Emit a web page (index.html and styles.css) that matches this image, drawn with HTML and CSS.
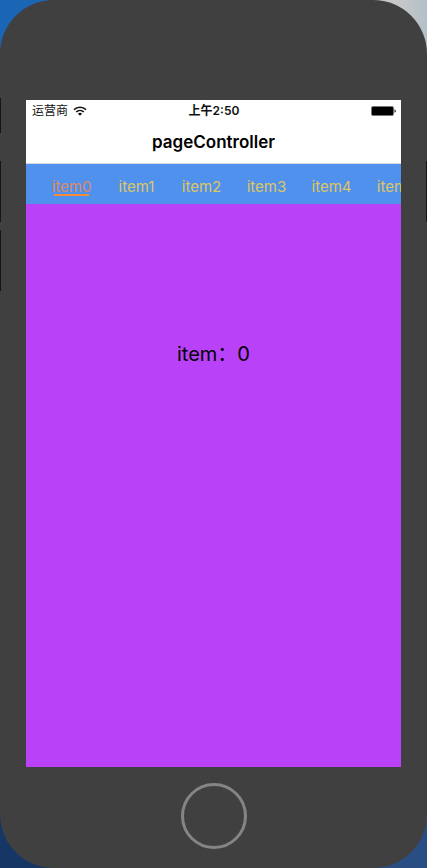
FILE: index.html
```html
<!DOCTYPE html>
<html lang="zh-CN">
<head>
<meta charset="utf-8">
<meta name="viewport" content="width=device-width, initial-scale=1">
<title>pageController</title>
<link rel="stylesheet" href="styles.css">
</head>
<body>
<div class="phone">
  <span class="side-key mute"></span>
  <span class="side-key volume-up"></span>
  <span class="side-key volume-down"></span>
  <span class="side-key power"></span>
  <main class="screen">
    <div class="status">
      <div class="carrier">
        <span>运营商</span>
        <svg class="wifi" viewBox="0 0 14 10" aria-hidden="true">
          <path d="M1 3.7a8.6 8.6 0 0 1 12 0M3.2 6a5.5 5.5 0 0 1 7.6 0" fill="none" stroke="#111" stroke-width="1.7"/>
          <path d="M4.9 7.7a3 3 0 0 1 4.2 0L7 9.8z" fill="#111"/>
        </svg>
      </div>
      <time class="clock">上午2:50</time>
      <svg class="battery" viewBox="0 0 25 10" aria-hidden="true">
        <rect x=".5" y=".5" width="22" height="9" rx="1.5" fill="#000" stroke="#777"/>
        <path d="M23.5 3.2q1.3 .5 1.3 1.8t-1.3 1.8z" fill="#111"/>
      </svg>
    </div>
    <header class="navbar"><h1>pageController</h1></header>
    <nav class="tabs">
      <button class="tab active" type="button"><span>item0</span></button>
      <button class="tab" type="button"><span>item1</span></button>
      <button class="tab" type="button"><span>item2</span></button>
      <button class="tab" type="button"><span>item3</span></button>
      <button class="tab" type="button"><span>item4</span></button>
      <button class="tab" type="button"><span>item5</span></button>
    </nav>
    <section class="page"><p>item：0</p></section>
  </main>
  <footer class="chin"><button class="home" type="button" aria-label="Home"></button></footer>
</div>
</body>
</html>
```
FILE: styles.css
```css
* { box-sizing: border-box; }

body {
  margin: 0;
  font-family: Inter, "Noto Sans CJK SC", sans-serif;
  background:
    linear-gradient(90deg, #1b65b5 50%, #c9cac7 50%, #c9cac7 92%, #b3bfc8) top / 100% 50% no-repeat,
    linear-gradient(90deg, #163765 50%, #294e83 50%) bottom / 100% 50% no-repeat;
}

.phone {
  position: relative;
  display: flex;
  flex-direction: column;
  min-height: 100vh;
  padding: 100px 26px 0;
  border-radius: 54px;
  background: #404040;
}

.side-key {
  position: absolute;
  left: 0;
  width: 1px;
  height: 61px;
  background: #151515;
}
.mute { top: 98px; height: 35px; }
.volume-up { top: 161px; }
.volume-down { top: 230px; }
.power { top: 161px; right: 0; left: auto; }

.screen {
  flex: 1;
  display: flex;
  flex-direction: column;
  overflow: hidden;
  background: #fff;
}

.status {
  display: grid;
  grid-template-columns: 1fr auto 1fr;
  align-items: center;
  height: 20px;
  padding: 1px 5px 0 6px;
  font-size: 12px;
  line-height: 20px;
  color: #111;
}
.carrier { display: flex; align-items: center; gap: 5px; }
.wifi { width: 14px; height: 10px; }
.clock { font-weight: 600; }
.battery { width: 25px; height: 10px; justify-self: end; }

.navbar {
  display: flex;
  align-items: center;
  justify-content: center;
  height: 44px;
  border-bottom: 1px solid #d5dae3;
}
h1 { margin: 0; font-size: 17px; line-height: 24px; font-weight: 600; color: #000; }

.tabs {
  display: flex;
  height: 40px;
  padding-left: 13px;
  overflow: hidden;
  background: #5091ee;
}
.tab {
  flex: 0 0 65px;
  display: flex;
  align-items: flex-start;
  justify-content: center;
  padding: 14px 0 0;
  border: 0;
  background: none;
  font: 15px/18px Inter, sans-serif;
  color: #dfc660;
}
.tab span { position: relative; }
.active { color: #df8961; }
.active span::after {
  content: "";
  position: absolute;
  right: 2px;
  bottom: 0;
  left: 2px;
  height: 2px;
  background: #f78a32;
}

.page {
  flex: 1;
  padding-top: 135px;
  background: #b941f8;
  text-align: center;
}
.page p { margin: 0; font-size: 20px; line-height: 30px; color: #000; }

.chin {
  display: flex;
  justify-content: center;
  height: 101px;
  padding-top: 16px;
}
.home {
  width: 66px;
  height: 66px;
  border: 3px solid #858585;
  border-radius: 50%;
  background: none;
}
```
